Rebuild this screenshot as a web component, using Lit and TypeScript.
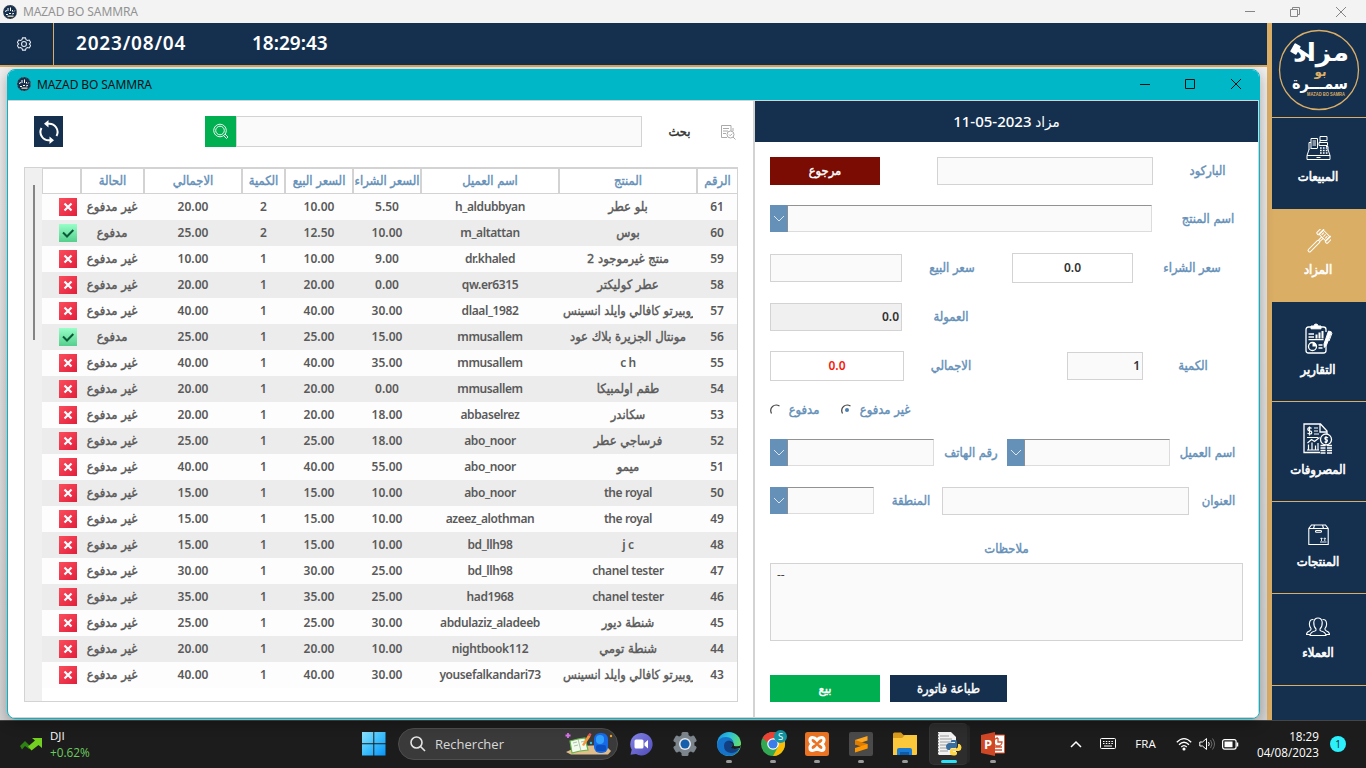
import { LitElement, html, css, svg, nothing } from "lit";
import { customElement, property } from "lit/decorators.js";

const PAID = "مدفوع";
const UNPAID = "غير مدفوع";

// id, product, customer, buy price, sell price, quantity, total, paid
type Row = [number, string, string, string, string, number, string, boolean?];
const ROWS: Row[] = [
  [61, "بلو عطر", "h_aldubbyan", "5.50", "10.00", 2, "20.00"],
  [60, "بوس", "m_altattan", "10.00", "12.50", 2, "25.00", true],
  [59, "منتج غيرموجود 2", "dr.khaled", "9.00", "10.00", 1, "10.00"],
  [58, "عطر كوليكتر", "qw.er6315", "0.00", "20.00", 1, "20.00"],
  [57, "روبيرتو كافالي وايلد انسينس", "dlaal_1982", "30.00", "40.00", 1, "40.00"],
  [56, "مونتال الجزيرة بلاك عود", "mmusallem", "15.00", "25.00", 1, "25.00", true],
  [55, "c h", "mmusallem", "35.00", "40.00", 1, "40.00"],
  [54, "طقم اولمبيكا", "mmusallem", "0.00", "20.00", 1, "20.00"],
  [53, "سكاندر", "abbaselrez", "18.00", "20.00", 1, "20.00"],
  [52, "فرساجي عطر", "abo_noor", "18.00", "25.00", 1, "25.00"],
  [51, "ميمو", "abo_noor", "55.00", "40.00", 1, "40.00"],
  [50, "the royal", "abo_noor", "10.00", "15.00", 1, "15.00"],
  [49, "the royal", "azeez_alothman", "10.00", "15.00", 1, "15.00"],
  [48, "j c", "bd_llh98", "10.00", "15.00", 1, "15.00"],
  [47, "chanel tester", "bd_llh98", "25.00", "30.00", 1, "30.00"],
  [46, "chanel tester", "had1968", "25.00", "35.00", 1, "35.00"],
  [45, "شنطة ديور", "abdulaziz_aladeeb", "30.00", "25.00", 1, "25.00"],
  [44, "شنطة تومي", "nightbook112", "10.00", "20.00", 1, "20.00"],
  [43, "روبيرتو كافالي وايلد انسينس", "yousefalkandari73", "30.00", "40.00", 1, "40.00"],
];

const HEADS = ["", "الحالة", "الاجمالي", "الكمية", "السعر البيع", "السعر الشراء", "اسم العميل", "المنتج", "الرقم"];

const appMark = html`<svg class="mark" width="14" height="14" viewBox="0 0 14 14">
  <circle cx="7" cy="7" r="6.9" fill="#15304f" />
  <circle cx="7" cy="7" r="6.5" fill="none" stroke="#b08d55" stroke-width=".5" stroke-dasharray="1.5 2" />
  <path d="M2.5 7l1-2M5 3v3M7.5 2.5V6M9.5 5v1.500M11 6.500l.8-1M3 9.500h2M6 8.500h2M9 9l2-.5" stroke="#fff" stroke-width="1" fill="none" />
  <path d="M4.500 11.200h6" stroke="#f0dcb4" stroke-width="1.300" />
</svg>`;

const SIDE_ICONS: Record<string, unknown> = {
  sales: svg`<g fill="none" stroke="#fff" stroke-width="1">
    <path d="M3 14.500L1 20.500V24.500H24V20.500L22 14.500M1 20.500H24M3 15V7.500H5M22 15V11.500H20" />
    <path d="M5 13V3.500H11.500V13M6.500 6h3.500M6.500 8h3.500M6.500 10h3.500M14 7V5.500M14 1.500h7v4h-7zM13 7.500h8.500v3H13zM4.500 13.500h7" />
    <path d="M14 13h7.500M14 15.500h7.500M14 18h7.500" stroke-width="1.500" stroke-dasharray="1.700 1.200" /><path d="M10.500 22.500h4" /></g>`,
  auction: svg`<g transform="rotate(45 12.500 12.500)" fill="none" stroke="#fff" stroke-width="1">
    <rect x="7.500" y="1" width="10" height="6" /><rect x="5" y="0" width="3" height="8" rx="1.200" /><rect x="17" y="0" width="3" height="8" rx="1.200" />
    <path d="M10 2.500v3M12.500 2.500v3M15 2.500v3M11.500 7v4.500M13.500 7v4.500" /><rect x="11" y="11.500" width="3" height="15" rx="1.200" /></g>`,
  reports: svg`<g fill="none" stroke="#fff" stroke-width="1.300">
    <path d="M7 4H4.500Q2 4 2 6.500V27.500Q2 30 4.500 30H19.500Q22 30 22 27.500V22M17 4h2.500Q22 4 22 6.500V9" />
    <path d="M7 5.800V3h3Q10 1 12 1t2 2h3v2.800z" fill="#fff" stroke-width="1" />
    <path d="M4.500 11h5.500M4.500 14h5.500M4.500 16.700h15M14.500 22h4M14.500 25h4" stroke-width="1.300" />
    <path d="M12.500 15.500v-4M15.500 15.500V9.500M18.500 15.500V8" stroke-width="2" />
    <circle cx="8.500" cy="23.500" r="4" /><path d="M8.500 23.500v-4a4 4 0 0 1 4 4z" fill="#fff" stroke="none" />
    <path d="M24.500 8l3 1-5 13-2.200 2.500-.3-3.500z" fill="#fff" stroke="#fff" stroke-width="1" /><path d="M28 10l-3 8" stroke-width="1" /></g>`,
  costs: svg`<g fill="none" stroke="#fff" stroke-width="1.300">
    <path d="M17 29.500H1V1H17.500L24 8V11M17 1v8h7" />
    <path d="M8.500 5.500q-1-1.200-2.500-.8t-1.200 1.800 2 1.300 1.900 1.500-1.500 1.600-2.700-.8M6.500 3.500v9" stroke-width="1.200" />
    <path d="M11 5h4M11 8h4M11 11h5M4 14.500h11M4 27h12M5.500 26.500v-5M9 26.500v-7M12.500 26.500v-4M15 27v-7M4.500 20l4-3.500 3 2 5-4" stroke-width="1.200" />
    <circle cx="23" cy="16.500" r="5.500" /><path d="M25 15q-1-1-2.300-.6t-.7 1.600 1.800.9.200 2-2.300-.4M23 13v7" stroke-width="1.100" />
    <path d="M17.500 22.500h5M17.500 25h5M17.500 27.500h5M17.500 30h5M24 22.500h5M24 25h5M24 27.500h5M24 30h5" stroke-width="1.700" /></g>`,
  products: svg`<g fill="none" stroke="#fff" stroke-width="1.100">
    <path d="M.8 4.500V20.500H20.200V4.500L17.500 1H3.500zM.8 4.500H20.200M6.500 1L5.500 4.500M14.500 1l1 3.500" /><rect x="7.500" y="6.500" width="6" height="1.800" rx=".9" />
    <path d="M12 18h6.500M13.500 17v-3M16.800 17v-3M12.500 14.800l1-1 1 1M15.800 14.800l1-1 1 1" stroke-width=".9" /></g>`,
  clients: svg`<g fill="none" stroke="#fff" stroke-width="1.100">
    <path d="M4 18.500Q4.500 15 9 14Q10.500 13.500 10 12Q7.500 9.500 7.800 5Q8.500 1 12 1t4.200 4Q16.500 9.500 14 12Q13.500 13.500 15 14Q19.500 15 20 18.500z" />
    <path d="M7.500 2.500Q4 2 3.500 6q-.5 3 1.500 5.500 .5 1.500-1.500 2.500Q.5 15 .5 17.500H4M16.500 2.500Q20 2 20.500 6q.5 3-1.500 5.500-.5 1.500 1.500 2.500 3 1 3 3.500H20" /></g>`,
};

// Arabic captions: regular weight thickened by a hairline stroke
const arabic = css`
  .ar { font: 12.900px/18px "DejaVu Sans Condensed", "DejaVu Sans", sans-serif; font-stretch: condensed; -webkit-text-stroke: .4px currentColor; }
`;

@customElement("data-table")
class DataTable extends LitElement {
  static styles = [css`
    :host { display: flex; box-sizing: border-box; width: 714px; height: 535px; border: 1px solid #d3d3d3; background: #fff; }
    .scroll { width: 17px; background: #f0f0f0; display: flex; justify-content: center; flex: none; padding-top: 17px; box-sizing: border-box; }
    .thumb { width: 2px; height: 155px; background: #858585; }
    .body { flex: 1; }
    .row { display: grid; grid-template-columns: 38px 64px 98px 43px 68px 68px 138px 138px 40px; height: 26px; background: #fdfdfd; }
    .row.heads { grid-template-columns: 40px 63px 98px 43px 68px 68px 138px 138px 39px; }
    .row.alt { background: #ececec; }
    .cell { display: flex; align-items: center; justify-content: center; overflow: hidden; white-space: nowrap; min-width: 0; box-sizing: border-box; padding-bottom: 1px;
      font: 600 12px "Noto Sans", "DejaVu Sans Condensed", "DejaVu Sans", sans-serif; color: #5a5a5a; }
    .cell.latin { letter-spacing: -.4px; }
    .cell.prod { margin: 0 4px; }
    .cell.prod.long { justify-content: flex-start; }
    .cell.head { color: #6590b8; background: #fff; border-right: 2px solid #d3d3d3; border-bottom: 1px solid #d3d3d3; border-top: 1px solid #d3d3d3; padding-bottom: 0; }
    .cell.head:first-child { border-left: 1px solid #d3d3d3; }
    .cell.head:last-child { border-right: 0; }
    .cell.state { justify-content: flex-end; padding: 0 3px 0 0; }
    .flag { display: block; flex: none; }
  `, arabic, css`.cell.ar { font: 12.900px/18px "DejaVu Sans Condensed", "DejaVu Sans", sans-serif; font-stretch: condensed; } .cell.long { font-size: 12.600px; }`];
  render() {
    const isAr = (s: string) => /[\u0600-\u06ff]/.test(s);
    return html`<div class="scroll"><div class="thumb"></div></div>
      <div class="body">
        <div class="row heads">${HEADS.map((h) => html`<div class="cell ar head" dir="rtl">${h}</div>`)}</div>
        ${ROWS.map(([id, product, client, buy, sell, qty, total, paid], i) => html`<div class="row ${i % 2 ? "alt" : ""}">
          <div class="cell state"><svg class="flag" width="18" height="18" viewBox="0 0 18 18">
            <defs>
              <linearGradient id="r" x2="1" y2="1"><stop stop-color="#fa4e5c" /><stop offset="1" stop-color="#e21f3c" /></linearGradient>
              <linearGradient id="g" x2="0" y2="1"><stop stop-color="#97ffc8" /><stop offset="1" stop-color="#55cf8d" /></linearGradient>
            </defs>
            <rect width="18" height="18" fill="url(#${paid ? "g" : "r"})" />
            ${paid ? svg`<path d="M4 8.500l4 4L14.300 6" fill="none" stroke="#0c5a37" stroke-width="2" />`
              : svg`<path d="M5.500 5.500l7 7M12.500 5.500l-7 7" stroke="#fff" stroke-width="2.200" />`}
          </svg></div>
          <div class="cell ar" dir="rtl">${paid ? PAID : UNPAID}</div>
          <div class="cell">${total}</div><div class="cell">${qty}</div><div class="cell">${sell}</div><div class="cell">${buy}</div>
          <div class="cell latin">${client}</div>
          <div class="cell prod ${isAr(product) ? "ar" : "latin"} ${product.length > 24 ? "long" : ""}"><span dir=${isAr(product) ? "rtl" : "ltr"}>${product}</span></div>
          <div class="cell">${id}</div>
        </div>`)}
      </div>`;
  }
}

@customElement("combo-box")
class ComboBox extends LitElement {
  static styles = css`
    :host { display: flex; height: 28px; box-sizing: border-box; }
    .btn { width: 17px; height: 27px; background: #6590b8; border-right: 1px solid #8a8f96; display: flex; align-items: center; justify-content: center; flex: none; }
    .field { flex: 1; height: 27px; box-sizing: border-box; background: #fafafa; border: solid #dcdcdc; border-width: 1px 1px 1px 0; border-top-color: #929292; }
  `;
  render() {
    return html`<div class="btn"><svg width="12" height="8" viewBox="0 0 12 8"><path d="M1 1l5 5 5-5" fill="none" stroke="#dce6f0" stroke-width="1" /></svg></div><div class="field"></div>`;
  }
}

@customElement("entry-form")
class EntryForm extends LitElement {
  static styles = [css`
    :host { display: block; width: 503px; background: #fff; font-family: "Noto Sans", "DejaVu Sans", sans-serif; }
    .title { height: 41px; box-sizing: border-box; padding-bottom: 2px; background: #15304f; color: #fff; display: flex; align-items: center; justify-content: center; font: 500 15px "Noto Sans", "DejaVu Sans Condensed", sans-serif; }
    .title bdi { letter-spacing: .5px; }
    .form { padding-left: 15px; padding-top: 4px; display: flex; flex-direction: column; }
    .line { display: flex; align-items: center; height: 49px; }
    .line.s { height: 48px; }
    .line.radios { height: 39px; }
    .lbl { display: flex; justify-content: center; white-space: nowrap; color: #6590b8; }
    .box { box-sizing: border-box; height: 28px; border: 1px solid #d3d3d3; background: #fafafa; display: flex; align-items: center; justify-content: flex-end; padding: 0 2px 1px; color: #333; font: 600 12px "Noto Sans", sans-serif; }
    .box.mid { justify-content: center; background: #fff; height: 30px; }
    .box.off { background: #f0f0f0; }
    .box.red { color: #f8190c; }
    .btn { height: 28px; color: #fff; display: flex; align-items: center; justify-content: center; }
    .btn.back { background: #7a0c04; width: 110px; }
    .btn.sell { background: #00b050; width: 110px; height: 27px; }
    .btn.print { background: #15304f; width: 117px; height: 27px; margin-left: 10px; }
    .bar { width: 216px; margin-left: 57px; } .l-bar { width: 37px; margin-left: 36px; }
    .c-prod { width: 382px; } .l-prod { width: 56px; margin-left: 28px; }
    .f132 { width: 132px; } .l-sell { width: 50px; margin-left: 25px; }
    .f-buy { width: 121px; margin-left: 35px; } .l-buy { width: 58px; margin-left: 30px; }
    .l-com { width: 38px; margin-left: 30px; }
    .f134 { width: 134px; } .l-tot { width: 38px; margin-left: 28px; }
    .f-qty { width: 76px; margin-left: 97px; } .l-qty { width: 32px; margin-left: 34px; }
    .l-r1 { width: 32px; margin-left: 7px; margin-right: 21px; } .l-r2 { width: 52px; margin-left: 7px; }
    .c-tel { width: 164px; } .l-tel { width: 52px; margin-left: 11px; }
    .c-cli { width: 163px; margin-left: 10px; } .l-cli { width: 59px; margin-left: 8px; }
    .c-area { width: 104px; } .l-area { width: 38px; margin-left: 18px; }
    .f-addr { width: 247px; margin-left: 12px; } .l-addr { width: 35px; margin-left: 12px; }
    .notes-l { height: 36px; width: 473px; padding-top: 11px; box-sizing: border-box; align-items: center; }
    .notes { box-sizing: border-box; width: 473px; height: 78px; border: 1px solid #d3d3d3; background: #fafafa; padding: 4px 6px; color: #444; font: 12px/14px "Noto Sans", sans-serif; margin-top: 2px; }
    .actions { display: flex; margin-top: 34px; }
  `, arabic];
  private radio(on: boolean) {
    return html`<svg width="11" height="12" viewBox="0 0 11 12"><path d="M1.500 9.500Q-.5 5 2.500 2.500Q5.500-.2 9.500 2" fill="none" stroke="#444" stroke-width="1.200" />${on ? svg`<circle cx="6" cy="6" r="2" fill="#4b7fb0" />` : nothing}</svg>`;
  }
  private l(cls: string, text: string) { return html`<span class="lbl ar ${cls}" dir="rtl">${text}</span>`; }
  render() {
    return html`<div class="title"><span dir="rtl">مزاد <bdi dir="ltr">11-05-2023</bdi></span></div>
      <div class="form">
        <div class="line"><div class="btn ar back">مرجوع</div><div class="box bar"></div>${this.l("l-bar", "الباركود")}</div>
        <div class="line s"><combo-box class="c-prod"></combo-box>${this.l("l-prod", "اسم المنتج")}</div>
        <div class="line"><div class="box f132"></div>${this.l("l-sell", "سعر البيع")}<div class="box mid f-buy">0.0</div>${this.l("l-buy", "سعر الشراء")}</div>
        <div class="line"><div class="box off f132">0.0</div>${this.l("l-com", "العمولة")}</div>
        <div class="line"><div class="box mid red f134">0.0</div>${this.l("l-tot", "الاجمالي")}<div class="box f-qty">1</div>${this.l("l-qty", "الكمية")}</div>
        <div class="line radios">${this.radio(false)}${this.l("l-r1", PAID)}${this.radio(true)}${this.l("l-r2", UNPAID)}</div>
        <div class="line s"><combo-box class="c-tel"></combo-box>${this.l("l-tel", "رقم الهاتف")}<combo-box class="c-cli"></combo-box>${this.l("l-cli", "اسم العميل")}</div>
        <div class="line s"><combo-box class="c-area"></combo-box>${this.l("l-area", "المنطقة")}<div class="box f-addr"></div>${this.l("l-addr", "العنوان")}</div>
        ${this.l("notes-l", "ملاحظات")}
        <div class="notes">--</div>
        <div class="actions"><div class="btn ar sell">بيع</div><div class="btn ar print">طباعة فاتورة</div></div>
      </div>`;
  }
}

@customElement("side-item")
class SideItem extends LitElement {
  @property() icon = "";
  @property() label = "";
  static styles = [css`
    :host { display: flex; flex-direction: column; align-items: center; justify-content: center; gap: 6px; box-sizing: border-box; }
    .icon { display: block; }
  `, arabic, css`.label { color: #fff; font-size: 12.900px; line-height: 20px; -webkit-text-stroke: .6px #fff; white-space: nowrap; }`];
  private static size: Record<string, [number, number]> = {
    sales: [25, 26], auction: [25, 25], reports: [29, 31], costs: [30, 31], products: [21, 22], clients: [24, 20],
  };
  render() {
    const [w, h] = SideItem.size[this.icon];
    return html`<svg class="icon" width=${w} height=${h} viewBox="0 0 ${w} ${h}">${SIDE_ICONS[this.icon]}</svg><span class="ar label" dir="rtl">${this.label}</span>`;
  }
}

@customElement("task-bar")
class TaskBar extends LitElement {
  static styles = css`
    :host { display: flex; box-sizing: border-box; height: 48px; background: #1c1c1c; border-top: 1px solid #454545; color: #fff; font: 12px/16px "Open Sans", "Noto Sans", sans-serif; align-items: center; padding-bottom: 1px; }
    .stock { display: flex; width: 362px; padding-left: 20px; box-sizing: border-box; align-items: center; gap: 8px; font-size: 11.500px; }
    .up { color: #6ccb5f; font-size: 11.800px; }
    .search { width: 220px; height: 32px; box-sizing: border-box; border-radius: 16px; background: #3a3a3a; border: 1px solid #4e4e4e; margin-left: 12px; display: flex; align-items: center; padding-left: 11px; color: #d8d8d8; font-size: 13px; }
    .word { margin-left: 9px; width: 130px; }
    .apps { display: flex; margin-left: 1px; }
    .app { width: 44px; height: 46px; display: flex; flex-direction: column; align-items: center; box-sizing: border-box; padding-top: 9px; }
    .app svg { display: block; flex: none; }
    .dot { width: 6px; height: 3px; border-radius: 2px; background: #9a9a9a; margin-top: 2px; flex: none; }
    .app.active { margin: 3px 4px 3px 3px; width: 37px; height: 40px; padding-top: 6px; background: #2d2d2d; border-radius: 4px; box-shadow: 4px 0 0 -1px #262626, 0 0 0 1px #353535; }
    .active .dot { width: 16px; background: #2ce0f5; }
    .tray { display: flex; align-items: center; margin-left: auto; padding-right: 20px; }
    .lang { margin: 0 20px 0 19px; font-size: 11.500px; width: 21px; display: flex; justify-content: center; }
    .tray svg { display: block; }
    .gap { margin-left: 7px; }
    .clock { width: 70px; text-align: right; font-size: 11.700px; margin-left: 9px; }
    .badge { width: 16px; height: 16px; border-radius: 50%; background: #2cf0fc; color: #1c1c1c; font-size: 10px; text-align: center; margin-left: 11px; }
    .chev { margin-right: 18px; }
  `;
  private app(body: unknown, dot = true, active = false) {
    return html`<div class="app ${active ? "active" : ""}"><svg width="28" height="28" viewBox="0 0 28 28">${body}</svg>${dot ? html`<i class="dot"></i>` : nothing}</div>`;
  }
  render() {
    return html`
      <div class="stock"><svg width="22" height="14" viewBox="0 0 22 14"><path d="M0 9l5-5 4 4 2 3-2 1-4-3-3 3.500z" fill="#2c8212" /><path d="M8 9.500l7-6-3-2.500H22V11l-3.500-3-7 5.500z" fill="#74d020" /></svg>
        <div>DJI<div class="up">+0.62%</div></div></div>
      <svg width="24" height="24" viewBox="0 0 24 24"><defs><linearGradient id="w" x2="1" y2="1"><stop stop-color="#8fe3fe" /><stop offset=".5" stop-color="#3dbffc" /><stop offset="1" stop-color="#0794fa" /></linearGradient></defs><path d="M0 0h11.300v11.300H0zM12.300 0h11.200v11.300H12.300zM0 12.300h11.300v11.200H0zM12.300 12.300h11.200v11.200H12.300z" fill="url(#w)" /></svg>
      <div class="search"><svg width="16" height="16" viewBox="0 0 16 16" fill="none" stroke="#e4e4e4" stroke-width="1.600"><circle cx="6.500" cy="6.500" r="5.500" /><path d="M10.500 10.500l4.500 4.500" /></svg>
        <span class="word">Rechercher</span>
        <svg width="48" height="24" viewBox="0 0 48 24"><path d="M1 20L14 14 40 13l6 6-3 3.500H6z" fill="#e2bd8c" /><path d="M5 9l8-2 7-1 3 12-8 1-8 2z" fill="#f3fbee" stroke="#65b54a" stroke-width="1.200" /><path d="M13 7l3 12M8 11l4-1M9 14l4-1M16 10l4-1" stroke="#98b890" stroke-width=".8" /><path d="M17 13l6-10 2.500 1.500L19 14z" fill="#f6963c" /><path d="M23 3l1.500-2 2 1-1 2.500z" fill="#ed5564" />
          <rect x="29" y="1" width="14" height="20" rx="6" fill="#1769e6" /><rect x="31" y="3" width="8" height="9" rx="4" fill="#31a0fa" /><rect x="31" y="13" width="10" height="6" rx="2" fill="#0c4fc0" /><path d="M3 1v5M.5 3.500h5" stroke="#d673e8" stroke-width="1.800" /><circle cx="46" cy="4" r="1.200" fill="#f7a51d" /><circle cx="26" cy="11" r="1.200" fill="#39c1df" /></svg></div>
      <div class="apps">
        ${this.app(svg`<defs><linearGradient id="t" x2="1" y2="1"><stop stop-color="#8384e8" /><stop offset="1" stop-color="#514bb8" /></linearGradient></defs><path d="M14 3a11.200 11.200 0 1 1-5 21l-5.500.8 1.200-5A11.200 11.200 0 0 1 14 3z" fill="url(#t)" /><rect x="7.500" y="9.500" width="9" height="9" rx="1.500" fill="#fff" /><path d="M17.500 13l3.500-3v8.500l-3.500-3z" fill="#fff" />`, false)}
        ${this.app(svg`<g fill="#7d858c"><circle cx="14" cy="14" r="9.500" />${[0, 60, 120].map((a) => svg`<rect x="10.500" y="2" width="7" height="24" rx="1.500" transform="rotate(${a} 14 14)" />`)}</g><circle cx="14" cy="14" r="6" fill="#e6e9ec" /><circle cx="14" cy="14" r="4.500" fill="#155fac" />`, false)}
        ${this.app(svg`<defs><linearGradient id="e" x2="1" y2=".4"><stop stop-color="#178fe0" /><stop offset=".5" stop-color="#2dc3dd" /><stop offset="1" stop-color="#62dc6c" /></linearGradient></defs><circle cx="14" cy="14" r="12" fill="url(#e)" /><path d="M2 15Q3 7 11 7q7 0 7.500 6.500 0 2-1.500 3.500 3 2.500 8 1Q21 26 14 26 2.500 25 2 15z" fill="#1573c9" /><path d="M9 16q0-5 5-5.500 4 .5 3.500 4-.5 1-1.200 2.500 2 3 7.700 2-3 4-8 4Q9 22 9 16z" fill="#123f80" /><path d="M14 12q4 0 3.500 3-.2 1-1.500 2.500 2 2.500 9 .5l1-3q-2 2-7 1 0-5-5-4z" fill="#1c1c1c" />`)}
        ${this.app(svg`<circle cx="14" cy="14" r="12" fill="#33a853" /><path d="M14 14L3.600 8A12 12 0 0 1 24.400 8z" fill="#ea4335" /><path d="M14 8h10.400A12 12 0 0 1 14 26l5-9z" fill="#fbbc05" /><path d="M3.600 8A12 12 0 0 1 24.400 8H14l-6 4z" fill="#ea4335" /><circle cx="14" cy="14" r="5.800" fill="#fff" /><circle cx="14" cy="14" r="4.600" fill="#3b7de8" /><circle cx="21.500" cy="6.500" r="6.500" fill="#1295a4" /><text x="21.500" y="10" font-size="9.500" font-family="Open Sans, sans-serif" text-anchor="middle" fill="#fff">S</text>`)}
        ${this.app(svg`<rect x="2" y="2" width="24" height="24" rx="2.500" fill="#ea7424" /><path d="M9.500 7.500Q12 7.500 14 10Q16 7.500 18.500 7.500Q21 7.500 21 10.500Q21 12.500 18.500 14Q21 15.500 21 17.500Q21 20.500 18.500 20.500Q16 20.500 14 18Q12 20.500 9.500 20.500Q7 20.500 7 17.500Q7 15.500 9.500 14Q7 12.500 7 10.500Q7 7.500 9.500 7.500z" fill="none" stroke="#fff" stroke-width="3.200" />`)}
        ${this.app(svg`<rect x="2" y="2" width="24" height="24" rx="2" fill="#4a4a4a" /><path d="M20.500 6v4.500L8 14.500V10z" fill="#ffa81f" /><path d="M8 10v4.500l12.500 4V14z" fill="#dd7c00" /><path d="M20.500 14v4.500L8 22.500V18z" fill="#ff9800" />`)}
        ${this.app(svg`<path d="M2 4q0-1.500 1.500-1.500H10L12.500 5H24q2 0 2 2v17H2z" fill="#d99c1c" /><path d="M2 8h9l3-3h12v19q0 1-1 1H2z" fill="#fbc83c" /><path d="M6 25v-5q0-2 2-2h11q2 0 2 2v5z" fill="#1a7bd4" /><path d="M9 22h9v3H9z" fill="#0d5aa8" />`)}
        ${this.app(svg`<path d="M3 2h13l5 5v18H3z" fill="#f2f2f2" /><path d="M5 6h9M5 9h12M5 12h12M5 15h8M5 18h8M5 21h8" stroke="#9c9c9c" /><path d="M3 3v22" stroke="#444" stroke-width="1.200" stroke-dasharray="1.500 1.500" /><path d="M15 10h5q2 0 2 2v4q0 2-2 2h-3q-2 0-2 2h-2q-2-1-2-3.500t3-3.500h6v-1h-4v-1q0-1 1-1z" fill="#386f9f" /><path d="M23 14h1.500q2 1 2 3.500t-2.500 3.500h-6v1h4v1.500q0 2-3.500 2T15 23v-3q0-1.500 2-1.500h3.500q2.500 0 2.500-2.500z" fill="#ffd54a" />`, true, true)}
        ${this.app(svg`<path d="M13 5h12.500v18H13z" fill="#fff" stroke="#d35230" /><path d="M19 8v4h4a4 4 0 1 1-4-4M15 17h8M15 20h8" fill="none" stroke="#d35230" stroke-width="1.300" /><path d="M2 5l14-3v24L2 23z" fill="#d04726" /><text x="9" y="18.500" font-size="13" font-weight="700" font-family="Open Sans, sans-serif" text-anchor="middle" fill="#fff">P</text>`)}
      </div>
      <div class="tray">
        <svg class="chev" width="12" height="8" viewBox="0 0 12 8"><path d="M1 7l5-5 5 5" fill="none" stroke="#fff" stroke-width="1.500" /></svg>
        <svg width="16" height="12" viewBox="0 0 16 12" fill="none" stroke="#fff"><rect x=".5" y=".5" width="15" height="10" rx="1" /><path d="M3 3.500h10M3 5.500h10" stroke-dasharray="1.500 1.300" /><path d="M4 8h8" /></svg>
        <span class="lang">FRA</span>
        <svg width="16" height="14" viewBox="0 0 16 14" fill="none" stroke="#fff" stroke-width="1.300"><path d="M.8 5.200Q8-2 15.200 5.200M3 7.800q5-5 10 0M5.300 10q2.700-2.700 5.400 0" /><circle cx="8" cy="12" r=".9" fill="#fff" /></svg>
        <svg class="gap" width="16" height="14" viewBox="0 0 16 14" fill="none" stroke="#fff"><path d="M.8 5v4h2.700L7.500 12.500V1.500L3.500 5z" /><path d="M9.500 5q1.500 2 0 4" /><path d="M11.500 3q3 4 0 8M13.500 1.500q4 5.500 0 11" stroke="#6c6c6c" /></svg>
        <svg class="gap" width="18" height="11" viewBox="0 0 18 11"><rect x=".6" y=".6" width="13.500" height="9.500" rx="2" fill="none" stroke="#fff" stroke-width="1.200" /><rect x="2.500" y="2.500" width="8" height="5.700" fill="#fff" /><path d="M15.500 3.500v4" stroke="#fff" stroke-width="1.500" /></svg>
        <div class="clock">18:29<br />04/08/2023</div>
        <div class="badge">1</div>
      </div>`;
  }
}

@customElement("app-root")
class AppRoot extends LitElement {
  static styles = [css`
    :host { display: flex; flex-direction: column; width: 1366px; height: 768px; overflow: hidden; position: relative; background: #e4e4e4; font-family: "Noto Sans", sans-serif; }
    .titlebar { height: 23px; background: #f3f3f3; color: #929292; display: flex; align-items: center; padding-left: 3px; flex: none; }
    .name { font: 12px "Noto Sans", sans-serif; margin-left: 6px; letter-spacing: -.1px; white-space: nowrap; }
    .wins { margin-left: auto; display: block; }
    .main { display: flex; flex: 1; min-height: 0; }
    .desk { flex: 1; display: flex; flex-direction: column; background: linear-gradient(#f0f0f0, #d4d4d4); }
    .head { height: 42px; background: #15304f; border-bottom: 2px solid #d8a95f; display: flex; align-items: center; color: #fff; font: 600 19px "Noto Sans", sans-serif; }
    .head span { padding-bottom: 2px; }
    .gear { width: 54px; height: 42px; border-right: 1px solid #dbae66; box-sizing: border-box; display: flex; align-items: center; padding-left: 17px; margin-right: 22px; }
    .date { width: 176px; letter-spacing: .8px; }
    .side { width: 94px; border-left: 5px solid #dbae66; background: #15304f; display: flex; flex-direction: column; }
    .logo { height: 94px; border-bottom: 1px solid #dbae66; display: flex; justify-content: center; }
    side-item { border-bottom: 1px solid #dbae66; height: 92px; padding: 0 2px 0 0; }
    .sales { height: 91px; border: 0; padding-bottom: 6px; }
    .auction { height: 93px; background: #dbae66; border: 0; padding-bottom: 3px; }
    .tall { height: 100px; padding-bottom: 1px; }
    .dialog { position: absolute; left: 7px; top: 69px; width: 1253px; height: 650px; box-sizing: border-box; border: 1px solid #00b7c7; border-radius: 8px; overflow: hidden; background: #fff; box-shadow: 0 4px 14px rgba(0,0,0,.3); display: flex; flex-direction: column; }
    .dbar { height: 30px; box-sizing: content-box; background: #00b7c7; color: #101010; display: flex; align-items: center; padding-left: 9px; border-bottom: 1px solid #d3d3d3; flex: none; }
    .dbar .name, .dbar .mark, .dbar .wins { padding-bottom: 2px; }
    .panes { display: flex; flex: 1; min-height: 0; border-right: 1px solid #d3d3d3; border-bottom: 1px solid #d3d3d3; }
    .left { border-right: 2px solid #d3d3d3; padding: 15px 0 0 16px; width: 729px; }
    .tools { display: flex; align-items: center; height: 31px; margin-bottom: 20px; padding-left: 10px; }
    .sync { width: 29px; height: 31px; background: #15304f; display: flex; align-items: center; justify-content: center; }
    .find { width: 31px; height: 31px; background: #00b050; margin-left: 142px; display: flex; align-items: center; justify-content: center; }
    .query { width: 406px; height: 31px; box-sizing: border-box; border: 1px solid #d3d3d3; background: #fafafa; }
    .cap { width: 23px; margin: 0 29px 0 26px; color: #333; display: flex; justify-content: center; }
  `, arabic];
  render() {
    return html`
      <div class="titlebar">${appMark}<span class="name">MAZAD BO SAMMRA</span>
        <svg class="wins" width="122" height="20" viewBox="0 0 122 20" fill="none" stroke="#858585"><path d="M1 9.500h10" /><path d="M46.500 7.500h7v7h-7zM48.500 7.500V5.500h7v7h-2" /><path d="M92 5l10 10M102 5l-10 10" /></svg></div>
      <div class="main">
        <div class="desk"><div class="head">
          <div class="gear"><svg width="14" height="14" viewBox="0 0 24 24" fill="none" stroke="#e6eaef" stroke-width="1.800"><path d="M9.500 1.500h5l1 3.200 2.300 1.300 3.200-.8 2.400 4.200-2.300 2.600 2.300 2.600-2.400 4.200-3.200-.8-2.300 1.300-1 3.200h-5l-1-3.200-2.300-1.300-3.200.8L.6 14.600 2.900 12 .6 9.400 3 5.200l3.200.8 2.300-1.300z" /><circle cx="12" cy="12" r="4.200" /></svg></div>
          <span class="date">2023/08/04</span><span class="time">18:29:43</span></div></div>
        <div class="side">
          <div class="logo"><svg width="94" height="94" viewBox="0 0 94 94">
            <circle cx="47" cy="47" r="39.500" fill="none" stroke="#dbae66" stroke-width="1.300" />
            <g fill="#fff" font-family="DejaVu Sans" font-weight="700">
              <text x="77" y="38" direction="rtl" font-size="25" textLength="56" lengthAdjust="spacingAndGlyphs">مزاد</text>
              <text x="54.500" y="53" direction="rtl" font-size="13" textLength="12" lengthAdjust="spacingAndGlyphs" fill="#dbae66">بو</text>
              <text x="76" y="66" direction="rtl" font-size="16" textLength="56" lengthAdjust="spacingAndGlyphs">سمـــرة</text>
              <text x="35" y="73" font-size="4.500" font-family="Liberation Sans" textLength="38" lengthAdjust="spacingAndGlyphs" fill="#dbae66">MAZAD BO SAMRA</text></g>
            <path d="M27 25l12 8-1.500 2.500L25 28z" fill="#fff" /><rect x="20" y="21" width="7" height="10" rx="1" transform="rotate(30 23.500 26)" fill="#fff" />
          </svg></div>
          <side-item class="sales" icon="sales" label="المبيعات"></side-item>
          <side-item class="auction" icon="auction" label="المزاد"></side-item>
          <side-item class="tall" icon="reports" label="التقارير"></side-item>
          <side-item class="tall" icon="costs" label="المصروفات"></side-item>
          <side-item icon="products" label="المنتجات"></side-item>
          <side-item icon="clients" label="العملاء"></side-item>
        </div>
      </div>
      <task-bar></task-bar>
      <div class="dialog">
        <div class="dbar">${appMark}<span class="name">MAZAD BO SAMMRA</span>
          <svg class="wins" width="120" height="20" viewBox="0 0 120 20" fill="none" stroke="#101010"><path d="M1 10.500h10" /><path d="M46.500 5.500h9v9h-9z" /><path d="M92 5l10 10M102 5l-10 10" /></svg></div>
        <div class="panes">
          <div class="left">
            <div class="tools">
              <div class="sync"><svg width="22" height="24" viewBox="0 0 22 24" fill="none" stroke="#fff" stroke-width="2"><path d="M10 3.800A8.300 8.300 0 0 1 18.500 16M12 20.200A8.300 8.300 0 0 1 3.500 8" /><path d="M10.500 0v7.600L6 3.800zM11.500 16.400V24l4.500-3.800z" fill="#fff" stroke="none" /></svg></div>
              <div class="find"><svg width="16" height="17" viewBox="0 0 16 17" fill="none" stroke="#fff" stroke-width=".9"><circle cx="7" cy="7.500" r="6.300" /><circle cx="7" cy="7.500" r="4.300" /><path d="M10.500 12.500l3 3 1.500-1.500-3-3" /></svg></div>
              <div class="query"></div><span class="cap ar">بحث</span>
              <svg width="16" height="16" viewBox="0 0 16 16" fill="none" stroke="#aaa" stroke-width="1"><path d="M7 13.500H1.500V1.500h9.500V7M3 4.500h6M3 7h5M3 9.500h3M13 4v3" /><circle cx="10.500" cy="10.500" r="3.500" /><path d="M9 10.500l1.200 1.200 2-2M13 13l2.500 2.500" /></svg>
            </div>
            <data-table></data-table>
          </div>
          <entry-form></entry-form>
        </div>
      </div>`;
  }
}
